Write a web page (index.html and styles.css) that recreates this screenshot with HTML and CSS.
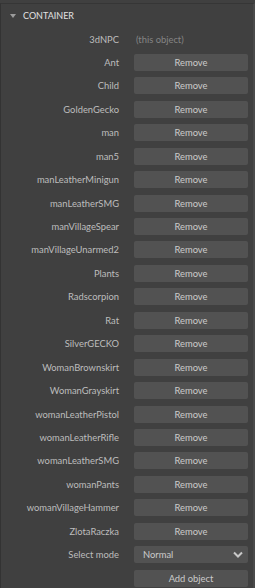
FILE: index.html
```html
<!DOCTYPE html>
<html lang="en">
<head>
  <title>Container</title>
  <meta charset="utf-8"/>
  <link rel="stylesheet" href="styles.css">
</head>
<body>
  <div class="panel">
    <div class="section-head">
      <span class="arrow"></span>
      <span class="section-title">CONTAINER</span>
    </div>
    <div class="props">
      <div class="label">3dNPC</div>
      <div class="note">(this object)</div>

      <div class="label">Ant</div><button class="btn">Remove</button>
      <div class="label">Child</div><button class="btn">Remove</button>
      <div class="label">GoldenGecko</div><button class="btn">Remove</button>
      <div class="label">man</div><button class="btn">Remove</button>
      <div class="label">man5</div><button class="btn">Remove</button>
      <div class="label">manLeatherMinigun</div><button class="btn">Remove</button>
      <div class="label">manLeatherSMG</div><button class="btn">Remove</button>
      <div class="label">manVillageSpear</div><button class="btn">Remove</button>
      <div class="label">manVillageUnarmed2</div><button class="btn">Remove</button>
      <div class="label">Plants</div><button class="btn">Remove</button>
      <div class="label">Radscorpion</div><button class="btn">Remove</button>
      <div class="label">Rat</div><button class="btn">Remove</button>
      <div class="label">SilverGECKO</div><button class="btn">Remove</button>
      <div class="label">WomanBrownskirt</div><button class="btn">Remove</button>
      <div class="label">WomanGrayskirt</div><button class="btn">Remove</button>
      <div class="label">womanLeatherPistol</div><button class="btn">Remove</button>
      <div class="label">womanLeatherRifle</div><button class="btn">Remove</button>
      <div class="label">womanLeatherSMG</div><button class="btn">Remove</button>
      <div class="label">womanPants</div><button class="btn">Remove</button>
      <div class="label">womanVillageHammer</div><button class="btn">Remove</button>
      <div class="label">ZlotaRaczka</div><button class="btn">Remove</button>

      <div class="label">Select mode</div>
      <div class="select">
        <span>Normal</span>
        <svg class="chev" width="10" height="7" viewBox="0 0 10 7">
          <path d="M1 1.5 L5 5.5 L9 1.5" fill="none" stroke="#c8c8c8" stroke-width="2"/>
        </svg>
      </div>

      <div class="label"></div><button class="btn">Add object</button>
    </div>
  </div>
</body>
</html>
```

FILE: styles.css
```css
html, body {
  margin: 0;
  padding: 0;
  background: #404040;
}

body {
  font-family: "Lato", "Noto Sans", sans-serif;
  font-size: 9.4px;
  color: #bdbdbd;
}

.panel {
  width: 255px;
  height: 588px;
  box-sizing: border-box;
  margin-top: 3px;
  border-top: 1px solid #363636;
  border-left: 1px solid #333333;
  border-right: 2px solid #4a4a4a;
  overflow: hidden;
}

.section-head {
  display: flex;
  align-items: center;
  height: 23px;
  padding-left: 9px;
}

.arrow {
  width: 0;
  height: 0;
  border-left: 3px solid transparent;
  border-right: 3px solid transparent;
  border-top: 4px solid #9c9c9c;
  margin-right: 7px;
}

.section-title {
  color: #e2e2e2;
  font-size: 9px;
}

.props {
  display: grid;
  grid-template-columns: 118px 114px;
  column-gap: 15px;
  row-gap: 6.45px;
  grid-auto-rows: 17px;
  margin-top: 3.5px;
}

.label {
  text-align: right;
  line-height: 17px;
  white-space: nowrap;
}

.note {
  color: #858585;
  line-height: 17px;
  padding-left: 2px;
}

.btn {
  font-family: inherit;
  font-size: inherit;
  color: #cbcbcb;
  background: #525252;
  border: none;
  border-radius: 2px;
  padding: 0;
  height: 17px;
  line-height: 17px;
}

.select {
  display: flex;
  align-items: center;
  justify-content: space-between;
  background: #525252;
  border-radius: 2px;
  padding: 0 5px 0 9px;
  color: #cbcbcb;
}
```
